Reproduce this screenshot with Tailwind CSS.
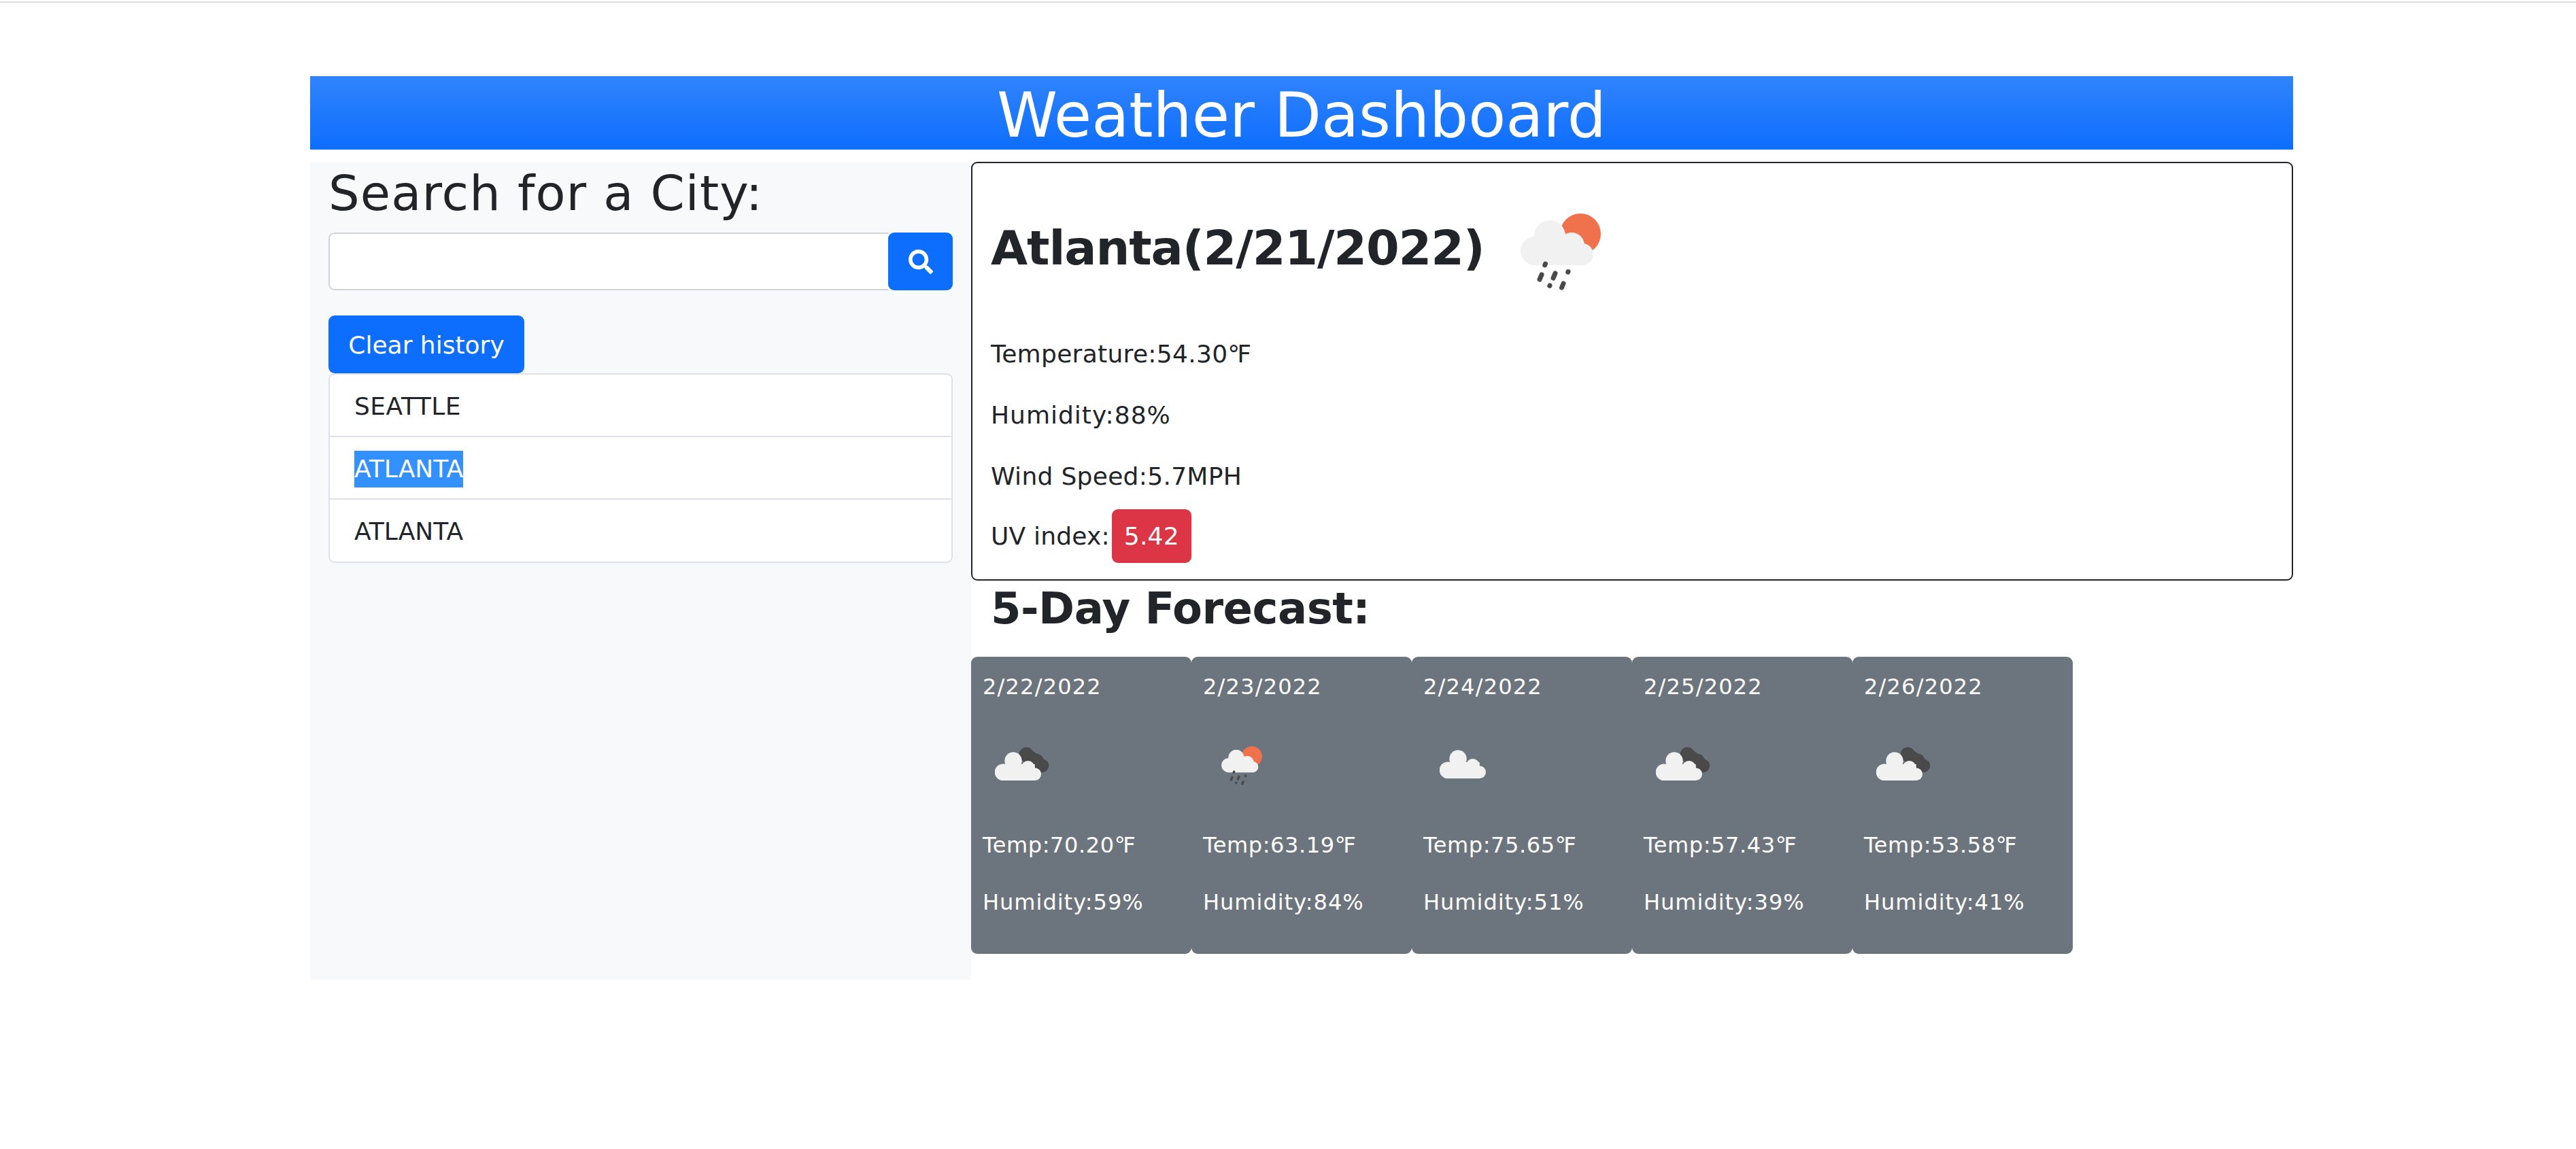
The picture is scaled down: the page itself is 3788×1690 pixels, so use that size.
<!DOCTYPE html>
<html lang="en">
<head>
<meta charset="utf-8">
<title>Weather Dashboard</title>
<script src="https://cdn.jsdelivr.net/npm/@tailwindcss/browser@4"></script>
</head>
<body class="bg-white text-[#212529] font-['DejaVu_Sans',sans-serif] text-[36px] leading-[54px]">
<div class="h-[2px] mt-[2px] bg-[#dedede]"></div>
<svg width="0" height="0" class="absolute">
  <defs>
    <symbol id="rain" viewBox="0 0 180 150">
      <circle cx="125" cy="55" r="30" fill="#ef724d"/>
      <g fill="#f1f1f1">
        <circle cx="80" cy="58" r="23"/><circle cx="58" cy="80" r="21"/><circle cx="112" cy="72" r="19"/><circle cx="128" cy="85" r="16"/><rect x="58" y="70" width="70" height="31"/>
      </g>
      <g stroke="#4a4a4a" stroke-width="7" stroke-linecap="round">
        <path d="M73.5 99l-.8 2"/><path d="M68 115l-3 7"/><path d="M88 113l-3 7"/><path d="M107 110.500l-.3 .8"/><path d="M80 131l-.2 .4"/><path d="M100 128l-2.500 6"/>
      </g>
    </symbol>
    <symbol id="clouds" viewBox="0 0 100 60">
      <g fill="#4a4a4a"><circle cx="46.300" cy="10.700" r="10.700"/><circle cx="61" cy="20" r="10.500"/><circle cx="69.800" cy="27.300" r="9.500"/><path d="M36 8 50 1 78 22 72 37 50 37z"/></g>
      <g fill="#f1f1f1"><circle cx="27" cy="20" r="12.700"/><circle cx="12" cy="36.700" r="12.300"/><circle cx="48.700" cy="30" r="10"/><circle cx="58.700" cy="39.700" r="9.300"/><rect x="12" y="25" width="46.700" height="24"/></g>
    </symbol>
    <symbol id="cloud" viewBox="0 0 100 60">
      <g fill="#f1f1f1"><circle cx="27" cy="20" r="12.700"/><circle cx="12" cy="36.700" r="12.300"/><circle cx="48.700" cy="30" r="10"/><circle cx="58.700" cy="39.700" r="9.300"/><rect x="12" y="25" width="46.700" height="24"/></g>
    </symbol>
  </defs>
</svg>
<div class="w-[2916px] ml-[456px] mt-[108px]">
  <h1 class="h-[108px] pt-[8px] bg-[#0d6efd] bg-linear-to-b from-white/15 to-white/0 text-white text-center text-[90px] leading-[100px] font-normal">Weather Dashboard</h1>
  <div class="flex mt-[18px]">
    <aside class="w-[972px] h-[1203px] bg-[#f8f9fa] px-[27px] shrink-0">
      <h2 class="text-[72px] leading-[86px] font-normal pt-[3px] tracking-[1.1px]">Search for a City:</h2>
      <div class="flex mt-[15px] h-[85px] w-[918px]">
        <input aria-label="City" class="grow min-w-0 bg-white border-2 border-[#ced4da] rounded-l-[9px] border-r-0">
        <button class="w-[95px] bg-[#0d6efd] rounded-[9px] flex items-center justify-center">
          <svg viewBox="0 0 512 512" class="w-[36px] h-[36px]" fill="#fff"><path d="M505 442.700 405.300 343c-4.500-4.500-10.600-7-17-7H372c27.600-35.300 44-79.700 44-128C416 93.100 322.900 0 208 0S0 93.100 0 208s93.100 208 208 208c48.300 0 92.700-16.400 128-44v16.300c0 6.400 2.500 12.500 7 17l99.700 99.700c9.400 9.400 24.600 9.400 33.900 0l28.300-28.300c9.400-9.400 9.400-24.600.1-34zM208 336c-70.700 0-128-57.200-128-128 0-70.700 57.200-128 128-128 70.700 0 128 57.200 128 128 0 70.700-57.200 128-128 128z"/></svg>
        </button>
      </div>
      <button class="block mt-[37px] w-[288px] h-[85px] pt-[2px] bg-[#0d6efd] text-white rounded-[9px]">Clear history</button>
      <ul class="w-[918px] bg-white border-2 border-[#dee2e6] rounded-[9px]">
        <li class="h-[92px] pl-[36px] pt-[3px] flex items-center border-b-2 border-[#dee2e6] tracking-[.5px]">SEATTLE</li>
        <li class="h-[92px] pl-[36px] pt-[3px] flex items-center border-b-2 border-[#dee2e6]"><span class="bg-[#3390ff] text-white">ATLANTA</span></li>
        <li class="h-[91px] pl-[36px] pt-[2px] flex items-center">ATLANTA</li>
      </ul>
    </aside>
    <main class="grow min-w-0">
      <section class="h-[616px] border-2 border-[#212529] rounded-[9px] px-[27px]">
        <div class="flex items-start h-[254px]">
          <h2 class="text-[70px] leading-[86px] font-bold mt-[82px] tracking-[-1.1px]">Atlanta(2/21/2022)</h2>
          <svg class="w-[180px] h-[150px] ml-[16px] mt-[49px] blur-[0.7px]"><use href="#rain"/></svg>
        </div>
        <p class="mb-[36px] tracking-[.3px]">Temperature:54.30<span class="tracking-[-4px]">°</span>F</p>
        <p class="mb-[36px] tracking-[1px]">Humidity:88%</p>
        <p class="mb-[36px] tracking-[.3px]">Wind Speed:5.7MPH</p>
        <p class="flex items-center -mt-[15px] tracking-[.2px]">UV index:<span class="ml-[3px] w-[117px] h-[79px] bg-[#dc3545] text-white rounded-[9px] flex items-center justify-center">5.42</span></p>
      </section>
      <h2 class="text-[64px] leading-[77px] font-bold ml-[29px] mt-[3px] tracking-[-.5px]">5-Day Forecast:</h2>
      <div class="flex mt-[32px] text-[32px] leading-[48px] text-white">
        <article class="w-[324px] h-[437px] bg-[#6c757d] rounded-[9px] px-[17px] pt-[20px]">
          <div class="tracking-[1.2px]">2/22/2022</div>
          <svg class="w-[100px] h-[60px] ml-[18px] mt-[65px] blur-[0.4px]"><use href="#clouds"/></svg>
          <p class="mt-[60px] tracking-[.6px]">Temp:70.20<span class="tracking-[-3.5px]">°</span>F</p>
          <p class="mt-[36px] tracking-[1px]">Humidity:59%</p>
        </article>
        <article class="w-[324px] h-[437px] bg-[#6c757d] rounded-[9px] px-[17px] pt-[20px]">
          <div class="tracking-[1.2px]">2/23/2022</div>
          <svg class="w-[92px] h-[76px] ml-[8px] mt-[51px] blur-[0.4px]"><use href="#rain"/></svg>
          <p class="mt-[58px] tracking-[.6px]">Temp:63.19<span class="tracking-[-3.5px]">°</span>F</p>
          <p class="mt-[36px] tracking-[1px]">Humidity:84%</p>
        </article>
        <article class="w-[324px] h-[437px] bg-[#6c757d] rounded-[9px] px-[17px] pt-[20px]">
          <div class="tracking-[1.2px]">2/24/2022</div>
          <svg class="w-[100px] h-[60px] ml-[24px] mt-[62px] blur-[0.4px]"><use href="#cloud"/></svg>
          <p class="mt-[63px] tracking-[.6px]">Temp:75.65<span class="tracking-[-3.5px]">°</span>F</p>
          <p class="mt-[36px] tracking-[1px]">Humidity:51%</p>
        </article>
        <article class="w-[324px] h-[437px] bg-[#6c757d] rounded-[9px] px-[17px] pt-[20px]">
          <div class="tracking-[1.2px]">2/25/2022</div>
          <svg class="w-[100px] h-[60px] ml-[18px] mt-[65px] blur-[0.4px]"><use href="#clouds"/></svg>
          <p class="mt-[60px] tracking-[.6px]">Temp:57.43<span class="tracking-[-3.5px]">°</span>F</p>
          <p class="mt-[36px] tracking-[1px]">Humidity:39%</p>
        </article>
        <article class="w-[324px] h-[437px] bg-[#6c757d] rounded-[9px] px-[17px] pt-[20px]">
          <div class="tracking-[1.2px]">2/26/2022</div>
          <svg class="w-[100px] h-[60px] ml-[18px] mt-[65px] blur-[0.4px]"><use href="#clouds"/></svg>
          <p class="mt-[60px] tracking-[.6px]">Temp:53.58<span class="tracking-[-3.5px]">°</span>F</p>
          <p class="mt-[36px] tracking-[1px]">Humidity:41%</p>
        </article>
      </div>
    </main>
  </div>
</div>
</body>
</html>
